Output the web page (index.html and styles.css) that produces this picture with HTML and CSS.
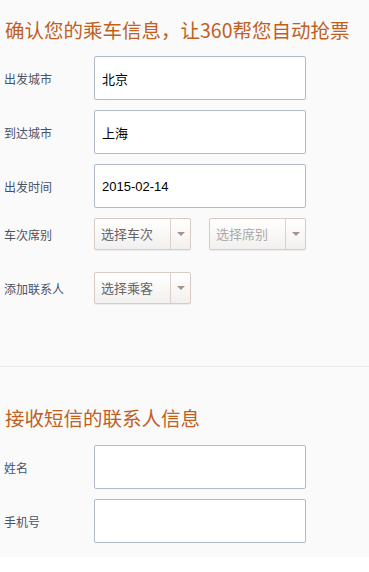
FILE: index.html
```html
<!DOCTYPE html>
<html lang="zh-CN">
<head>
    <meta charset="UTF-8">
    <meta name="viewport" content="width=device-width, initial-scale=1.0">
    <title>360抢票 - 确认乘车信息</title>
    <link rel="stylesheet" href="styles.css">
</head>
<body>
    <div class="page">
        <h1 class="title">确认您的乘车信息，让360帮您自动抢票</h1>
        <div class="form">
            <div class="row">
                <label class="label" for="from">出发城市</label>
                <input class="field" type="text" id="from" value="北京">
            </div>
            <div class="row">
                <label class="label" for="to">到达城市</label>
                <input class="field" type="text" id="to" value="上海">
            </div>
            <div class="row">
                <label class="label" for="date">出发时间</label>
                <input class="field field-date" type="text" id="date" value="2015-02-14">
            </div>
            <div class="row row-select">
                <span class="label">车次席别</span>
                <div class="select">
                    <span class="select-text">选择车次</span>
                    <span class="select-arrow"></span>
                </div>
                <div class="select disabled">
                    <span class="select-text">选择席别</span>
                    <span class="select-arrow"></span>
                </div>
            </div>
            <div class="row row-select row-contact">
                <span class="label">添加联系人</span>
                <div class="select">
                    <span class="select-text">选择乘客</span>
                    <span class="select-arrow"></span>
                </div>
            </div>
        </div>

        <div class="divider"></div>

        <h2 class="title title-sub">接收短信的联系人信息</h2>
        <div class="form">
            <div class="row">
                <label class="label" for="name">姓名</label>
                <input class="field" type="text" id="name">
            </div>
            <div class="row">
                <label class="label" for="phone">手机号</label>
                <input class="field" type="text" id="phone">
            </div>
        </div>
    </div>
</body>
</html>
```

FILE: styles.css
```css
body {
    margin: 0;
    background-color: #ffffff;
    font-family: "Noto Sans CJK SC", "Liberation Sans", sans-serif;
}
.page {
    background-color: #fafafa;
    padding: 18px 0 14px 0;
}
.title {
    margin: 0 0 14px 5px;
    font-size: 19.5px;
    line-height: 24px;
    font-weight: normal;
    color: #c0601f;
    white-space: nowrap;
}
.title-sub {
    margin-top: 39px;
    margin-bottom: 15px;
}
.form {
    display: flex;
    flex-direction: column;
    gap: 10px;
    padding-left: 4px;
}
.row {
    display: flex;
    align-items: center;
}
.row-contact {
    margin-top: 12px;
}
.label {
    width: 90px;
    font-size: 12px;
    color: #4b5166;
}
.field {
    box-sizing: border-box;
    width: 212px;
    height: 44px;
    margin: 0;
    padding: 0 7px;
    border: 1px solid #b3bbcb;
    border-radius: 2px;
    background-color: #ffffff;
    font-family: "Noto Sans CJK SC", "Liberation Sans", sans-serif;
    font-size: 13px;
    color: #000000;
    outline: none;
}
.field-date {
    font-family: "Liberation Sans", "Noto Sans CJK SC", sans-serif;
}
.row-select {
    gap: 0;
}
.select {
    box-sizing: border-box;
    display: flex;
    width: 97px;
    height: 32px;
    border: 1px solid #d8cbc3;
    border-radius: 2px;
    background: linear-gradient(#ffffff, #f2f0ee);
    box-shadow: 0 1px 1px rgba(0, 0, 0, 0.06);
}
.select + .select {
    margin-left: 18px;
}
.select-text {
    flex: 1;
    padding-left: 6px;
    font-size: 13px;
    line-height: 30px;
    color: #666666;
    border-right: 1px solid #ddd0c8;
}
.select-arrow {
    width: 19px;
    position: relative;
}
.select-arrow::after {
    content: "";
    position: absolute;
    left: 6px;
    top: 13px;
    border-left: 4px solid transparent;
    border-right: 4px solid transparent;
    border-top: 4px solid #a3958a;
}
.disabled .select-text {
    color: #aaaaaa;
}
.divider {
    height: 1px;
    margin-top: 62px;
    background-color: #e9e9e9;
}
```
